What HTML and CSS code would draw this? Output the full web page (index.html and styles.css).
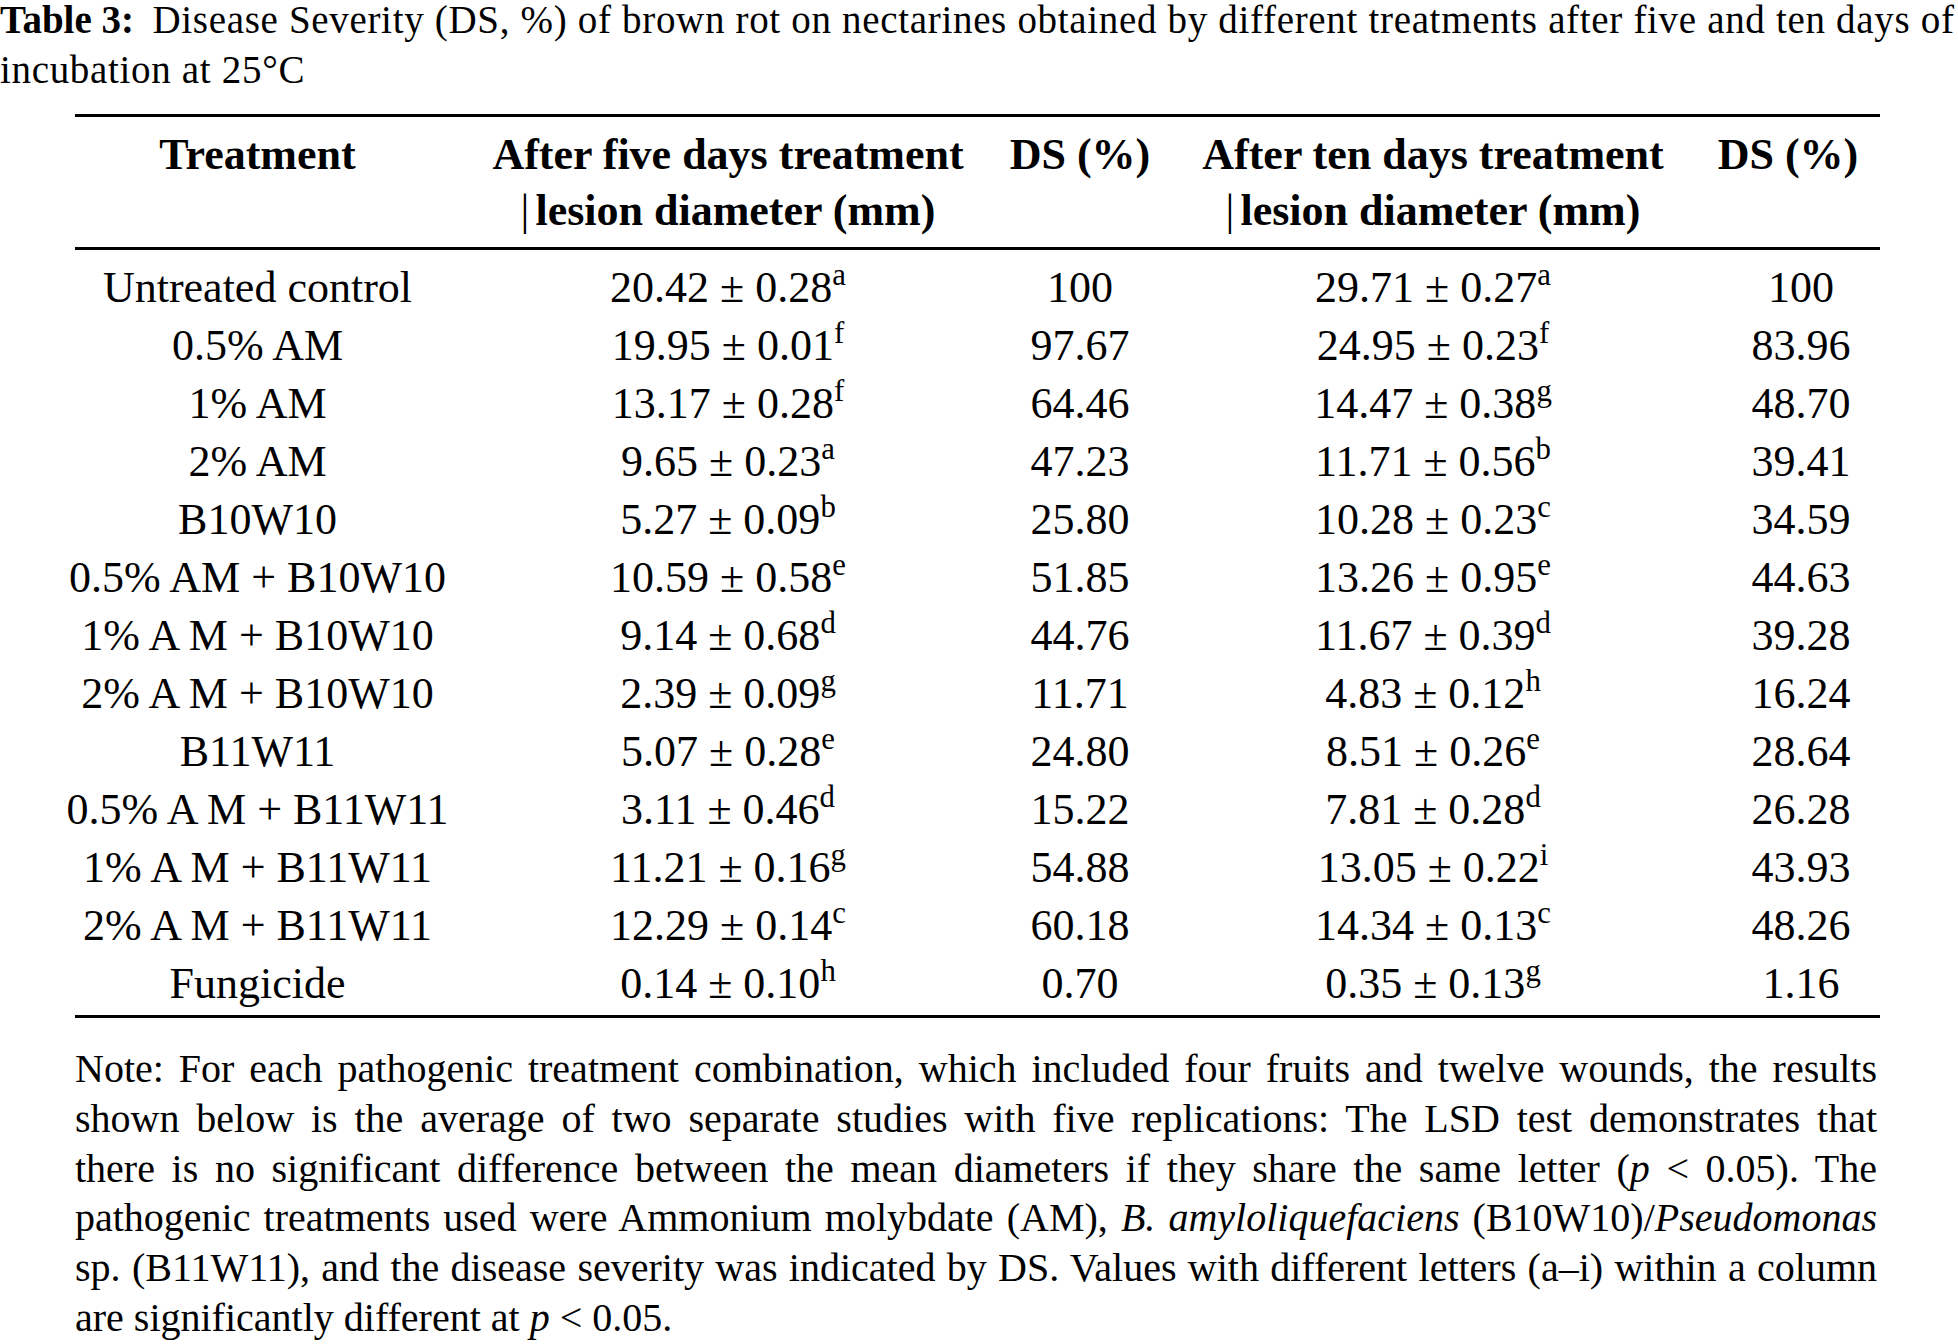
FILE: index.html
```html
<!DOCTYPE html>
<html lang="en">
<head>
<meta charset="utf-8">
<title>Table 3</title>
<link rel="stylesheet" href="styles.css">
</head>
<body>
<div class="page">
  <p class="caption"><span class="line"><b class="label">Table 3:</b> Disease Severity (DS, %) of brown rot on nectarines obtained by different treatments after five and ten days of</span><span class="line">incubation at 25°C</span></p>

  <div class="tbl">
    <div class="row head">
      <div class="cell">Treatment</div>
      <div class="cell">After five days treatment<br><span class="bar">|</span>lesion diameter (mm)</div>
      <div class="cell">DS (%)</div>
      <div class="cell">After ten days treatment<br><span class="bar">|</span>lesion diameter (mm)</div>
      <div class="cell ds-last">DS (%)</div>
    </div>
    <div class="body">
      <div class="row"><div class="cell">Untreated control</div><div class="cell">20.42 ± 0.28<sup>a</sup></div><div class="cell">100</div><div class="cell">29.71 ± 0.27<sup>a</sup></div><div class="cell">100</div></div>
      <div class="row"><div class="cell">0.5% AM</div><div class="cell">19.95 ± 0.01<sup>f</sup></div><div class="cell">97.67</div><div class="cell">24.95 ± 0.23<sup>f</sup></div><div class="cell">83.96</div></div>
      <div class="row"><div class="cell">1% AM</div><div class="cell">13.17 ± 0.28<sup>f</sup></div><div class="cell">64.46</div><div class="cell">14.47 ± 0.38<sup>g</sup></div><div class="cell">48.70</div></div>
      <div class="row"><div class="cell">2% AM</div><div class="cell">9.65 ± 0.23<sup>a</sup></div><div class="cell">47.23</div><div class="cell">11.71 ± 0.56<sup>b</sup></div><div class="cell">39.41</div></div>
      <div class="row"><div class="cell">B10W10</div><div class="cell">5.27 ± 0.09<sup>b</sup></div><div class="cell">25.80</div><div class="cell">10.28 ± 0.23<sup>c</sup></div><div class="cell">34.59</div></div>
      <div class="row"><div class="cell">0.5% AM + B10W10</div><div class="cell">10.59 ± 0.58<sup>e</sup></div><div class="cell">51.85</div><div class="cell">13.26 ± 0.95<sup>e</sup></div><div class="cell">44.63</div></div>
      <div class="row"><div class="cell">1% A M + B10W10</div><div class="cell">9.14 ± 0.68<sup>d</sup></div><div class="cell">44.76</div><div class="cell">11.67 ± 0.39<sup>d</sup></div><div class="cell">39.28</div></div>
      <div class="row"><div class="cell">2% A M + B10W10</div><div class="cell">2.39 ± 0.09<sup>g</sup></div><div class="cell">11.71</div><div class="cell">4.83 ± 0.12<sup>h</sup></div><div class="cell">16.24</div></div>
      <div class="row"><div class="cell">B11W11</div><div class="cell">5.07 ± 0.28<sup>e</sup></div><div class="cell">24.80</div><div class="cell">8.51 ± 0.26<sup>e</sup></div><div class="cell">28.64</div></div>
      <div class="row"><div class="cell">0.5% A M + B11W11</div><div class="cell">3.11 ± 0.46<sup>d</sup></div><div class="cell">15.22</div><div class="cell">7.81 ± 0.28<sup>d</sup></div><div class="cell">26.28</div></div>
      <div class="row"><div class="cell">1% A M + B11W11</div><div class="cell">11.21 ± 0.16<sup>g</sup></div><div class="cell">54.88</div><div class="cell">13.05 ± 0.22<sup>i</sup></div><div class="cell">43.93</div></div>
      <div class="row"><div class="cell">2% A M + B11W11</div><div class="cell">12.29 ± 0.14<sup>c</sup></div><div class="cell">60.18</div><div class="cell">14.34 ± 0.13<sup>c</sup></div><div class="cell">48.26</div></div>
      <div class="row"><div class="cell">Fungicide</div><div class="cell">0.14 ± 0.10<sup>h</sup></div><div class="cell">0.70</div><div class="cell">0.35 ± 0.13<sup>g</sup></div><div class="cell">1.16</div></div>
    </div>
  </div>

  <p class="note">
    <span class="nl">Note: For each pathogenic treatment combination, which included four fruits and twelve wounds, the results</span>
    <span class="nl">shown below is the average of two separate studies with five replications: The LSD test demonstrates that</span>
    <span class="nl">there is no significant difference between the mean diameters if they share the same letter (<i>p</i> &lt; 0.05). The</span>
    <span class="nl">pathogenic treatments used were Ammonium molybdate (AM), <i>B. amyloliquefaciens</i> (B10W10)/<i>Pseudomonas</i></span>
    <span class="nl">sp. (B11W11), and the disease severity was indicated by DS. Values with different letters (a–i) within a column</span>
    <span class="nl last">are significantly different at <i>p</i> &lt; 0.05.</span>
  </p>
</div>
</body>
</html>
```

FILE: styles.css
```css
html, body {
  margin: 0;
  padding: 0;
  background: #ffffff;
}

body {
  font-family: "Liberation Serif", "Times New Roman", serif;
  color: #000000;
}

.page {
  width: 1958px;
}

.caption {
  margin: -5px 0 0 0;
  font-size: 39px;
  line-height: 50px;
  letter-spacing: 0.68px;
}

.caption .line {
  display: block;
  white-space: nowrap;
}

.caption .label {
  margin-right: 8px;
  letter-spacing: 0;
}

.tbl {
  margin: 19px 0 0 75px;
  width: 1805px;
  border-top: 3px solid #000;
  border-bottom: 3px solid #000;
  font-size: 44px;
}

.row {
  display: grid;
  grid-template-columns: 365px 576px 128px 578px 158px;
  line-height: 58px;
}

.cell {
  justify-self: center;
  white-space: nowrap;
  text-align: center;
}

.head {
  line-height: 56px;
  font-weight: bold;
  padding: 10px 0 8px;
  border-bottom: 3px solid #000;
}

.head .ds-last {
  margin-right: 26px;
}

.bar {
  font-weight: normal;
  margin-right: 6px;
}

.body {
  padding: 9px 0 2px;
}

sup {
  font-size: 0.7em;
  line-height: 0;
  vertical-align: 0.55em;
}

.note {
  margin: 26px 0 0 75px;
  width: 1802px;
  font-size: 40px;
  line-height: 49.8px;
}

.note .nl {
  display: block;
  white-space: nowrap;
  text-align: justify;
  text-align-last: justify;
}

.note .nl.last {
  text-align-last: left;
}
```
